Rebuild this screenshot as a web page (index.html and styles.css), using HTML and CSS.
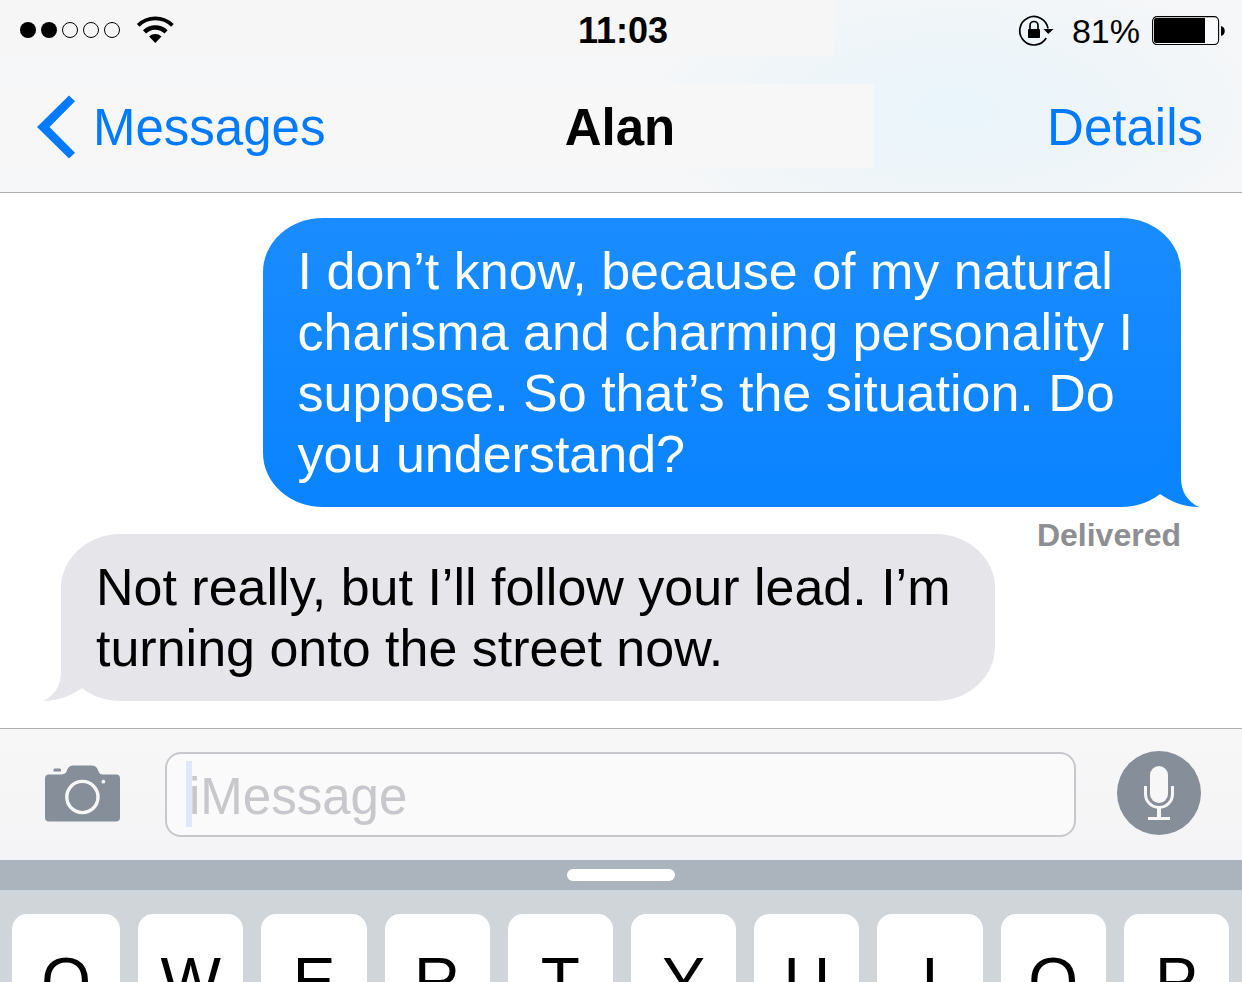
FILE: index.html
```html
<!DOCTYPE html>
<html lang="en">
<head>
<meta charset="utf-8">
<meta name="viewport" content="width=device-width, initial-scale=1">
<title>Alan</title>
<link rel="stylesheet" href="styles.css">
</head>
<body>
<div class="screen">
  <header class="header">
    <div class="status">
      <div class="status-left">
        <svg width="100" height="18" viewBox="0 0 100 18" role="img" aria-label="Signal">
          <circle cx="8" cy="9" r="8"/><circle cx="29" cy="9" r="8"/>
          <g fill="none" stroke="#000" stroke-width="1"><circle cx="50" cy="9" r="7.5"/><circle cx="71" cy="9" r="7.5"/><circle cx="92" cy="9" r="7.5"/></g>
        </svg>
        <svg width="38" height="28" viewBox="0 0 38 28" role="img" aria-label="Wi-Fi">
          <g fill="none" stroke="#000"><path stroke-width="3.8" d="M2.2 9.3a24.4 24.4 0 0 1 34.200 0"/><path stroke-width="4.400" d="M8.500 15.900a15.300 15.300 0 0 1 21.600 0"/></g>
          <path d="M19.300 27l-6.200-6.600a9 9 0 0 1 12.400 0z"/>
        </svg>
      </div>
      <time class="clock">11:03</time>
      <div class="status-right">
        <svg width="36" height="32" viewBox="0 0 36 32" role="img" aria-label="Rotation lock">
          <path fill="none" stroke="#000" stroke-width="1.7" d="M30 14.500A14.200 14.200 0 1 0 28.200 24"/>
          <path d="M25.500 15h10l-5.200 5z"/>
          <rect x="10" y="15" width="12" height="9" rx=".8"/>
          <path fill="none" stroke="#000" stroke-width="1.7" d="M12 16v-4.500a4 4 0 0 1 8 0v4.500"/>
        </svg>
        <span class="percent">81%</span>
        <svg width="74" height="30" viewBox="0 0 74 30" role="img" aria-label="Battery">
          <rect x=".6" y="1.600" width="66" height="28" rx="4.500" fill="#fff" fill-opacity=".5" stroke="#000" stroke-width="1.1"/>
          <path d="M4 3h49v25H4a2 2 0 0 1-2-2V5a2 2 0 0 1 2-2z"/>
          <path d="M69 11c5 1 5 9 0 10z"/>
        </svg>
      </div>
    </div>
    <nav class="nav">
      <a class="back" href="#">
        <svg width="38" height="64" viewBox="0 0 38 64" aria-hidden="true"><path fill="#007aff" d="M32 .5L38 6.3 12.5 32 38 57.7l-6 5.8L0 32z"/></svg>
        <span>Messages</span>
      </a>
      <h1 class="title">Alan</h1>
      <a class="details" href="#">Details</a>
    </nav>
  </header>

  <main class="thread">
    <p class="bubble sent">I don’t know, because of my natural<br>charisma and charming personality I<br>suppose. So that’s the situation. Do<br>you understand?<svg class="tail" width="39" height="67" viewBox="0 0 39 67" aria-hidden="true"><path fill="#0b84ff" d="M0 40L10 0H21V38C21 52 28 62 39 67C23 67 10 61 0 54Z"/></svg></p>
    <p class="receipt">Delivered</p>
    <p class="bubble received">Not really, but I’ll follow your lead. I’m<br>turning onto the street now.<svg class="tail" width="39" height="67" viewBox="0 0 39 67" aria-hidden="true"><path fill="#e5e5ea" d="M39 40L29 0H18V38C18 52 11 62 0 67C16 67 29 61 39 54Z"/></svg></p>
  </main>

  <form class="composer">
    <button class="icon-button" type="button" aria-label="Camera">
      <svg width="75" height="57" viewBox="0 0 75 57" aria-hidden="true">
        <path fill="#858e99" d="M4 9.500H15C23 9.500 21 5 23.500 2.500Q25 .5 28 .5H47Q50 .5 51.500 2.500C54 6 53.500 9.500 58 9.500H71a4 4 0 0 1 4 4V52.500a4 4 0 0 1-4 4H4a4 4 0 0 1-4-4V13.500a4 4 0 0 1 4-4zM9.500 3.500h5.500l1 1v2H8.500v-2z"/>
        <circle cx="37.400" cy="32" r="15.600" fill="none" stroke="#f7f7f8" stroke-width="3.400"/>
        <circle cx="58.400" cy="16.700" r="1.900" fill="#f7f7f8"/>
      </svg>
    </button>
    <div class="field">
      <input class="message-input" type="text" placeholder="iMessage" aria-label="iMessage">
      <span class="caret"></span>
    </div>
    <button class="icon-button" type="button" aria-label="Dictate">
      <svg width="84" height="84" viewBox="0 0 84 84" aria-hidden="true">
        <circle cx="42" cy="42" r="42" fill="#858e99"/>
        <rect x="33" y="15" width="18" height="37" rx="9" fill="#f7f7f8"/>
        <path fill="none" stroke="#f7f7f8" stroke-width="3" d="M28.500 35V43a13.500 13.500 0 0 0 27 0V35M31 67.500H53"/>
        <path fill="#f7f7f8" d="M40 57h4v10h-4z"/>
      </svg>
    </button>
  </form>

  <div class="grabber"><span class="handle"></span></div>
  <div class="keyboard">
    <button class="key" type="button">Q</button>
    <button class="key" type="button">W</button>
    <button class="key" type="button">E</button>
    <button class="key" type="button">R</button>
    <button class="key" type="button">T</button>
    <button class="key" type="button">Y</button>
    <button class="key" type="button">U</button>
    <button class="key" type="button">I</button>
    <button class="key" type="button">O</button>
    <button class="key" type="button">P</button>
  </div>
</div>
</body>
</html>
```

FILE: styles.css
```css
* { box-sizing: border-box; }

body {
  margin: 0;
  background: #fff;
  color: #000;
  font-family: "Liberation Sans", Arial, Helvetica, sans-serif;
  font-size: 51px;
  line-height: 61px;
}

svg { display: block; flex: none; }

button {
  margin: 0;
  padding: 0;
  border: 0;
  color: inherit;
  font: inherit;
}

.screen {
  display: flex;
  flex-direction: column;
  height: 100vh;
  overflow: hidden;
}

.header {
  flex: none;
  border-bottom: 1px solid #aeaeb0;
  background:
    linear-gradient(#f6f6f7, #f6f6f7) 0 0 / 67.2% 55px no-repeat,
    linear-gradient(#f7f7f7, #f7f7f7) 0 84px / 70.4% 84px no-repeat,
    radial-gradient(ellipse 330px 150px at 77% 110px, #e9f5fb, #eff5f9 55%, #f6f7f8) #f7f7f7;
}

.status {
  display: grid;
  grid-template-columns: 1fr auto 1fr;
  align-items: center;
  height: 60px;
  padding: 0 16px 0 20px;
  font-size: 36px;
  line-height: 58px;
}

.status-left { display: flex; align-items: center; gap: 16px; }
.status-right { display: flex; align-items: center; justify-content: flex-end; gap: 12px; }
.clock { padding-top: 2px; font-weight: bold; }
.percent { padding: 2px 0 0 6px; font-size: 34px; }

.nav {
  display: grid;
  grid-template-columns: 1fr auto 1fr;
  align-items: center;
  height: 132px;
  padding: 2px 39px 0 37px;
}

.nav a { color: #007aff; text-decoration: none; }
.back { display: flex; align-items: center; gap: 18px; }
.title { margin: 0; font-size: 51px; }
.details { justify-self: end; }

.thread {
  display: flex;
  flex: none;
  flex-direction: column;
  padding: 25px 61px 27px;
}

.bubble {
  position: relative;
  margin: 0;
  padding: 23px 35px 22px;
  border-radius: 60px / 54px;
  font-size: 52px;
  white-space: nowrap;
}

.sent {
  align-self: flex-end;
  width: 82%;
  background: linear-gradient(#1a8cff, #0b84ff 90%);
  color: #fff;
}

.received {
  align-self: flex-start;
  width: 83.4%;
  background: #e5e5ea;
}

.tail { position: absolute; bottom: 0; }
.sent .tail { right: -18px; }
.received .tail { left: -18px; }

.receipt {
  align-self: flex-end;
  margin: 14px 0 -15px;
  color: #8e8e93;
  font-size: 32px;
  font-weight: bold;
  line-height: 28px;
}

.composer {
  display: flex;
  flex: none;
  align-items: center;
  height: 132px;
  padding: 0 41px 0 45px;
  border-top: 1px solid #aeaeb0;
  background: linear-gradient(#f7f7f7, #f4f4f6);
}

.icon-button { flex: none; padding-bottom: 3px; background: none; }
.field { position: relative; flex: 1; margin: 0 41px 0 45px; }

.message-input {
  display: block;
  width: 100%;
  height: 85px;
  padding: 3px 22px 0;
  border: 2px solid #c7c7cc;
  border-radius: 16px;
  background: #fafafa;
  color: #000;
  font: inherit;
}

.message-input::placeholder { color: #c7c7cc; opacity: 1; }

.caret {
  position: absolute;
  top: 9px;
  left: 21px;
  width: 6px;
  height: 66px;
  background: #e0e7fa;
}

.grabber {
  display: flex;
  flex: none;
  align-items: center;
  justify-content: center;
  height: 30px;
  background: #abb3bd;
}

.handle { width: 108px; height: 12px; border-radius: 6px; background: #fff; }

.keyboard {
  display: grid;
  flex: 1 0 auto;
  grid-template-columns: 108fr repeat(9, 105fr);
  gap: 18px;
  padding: 24px 13px 24px 12px;
  background: #d0d5da;
}

.key {
  height: 134px;
  border-radius: 15px;
  background: #fff;
  font-size: 64px;
}
```
